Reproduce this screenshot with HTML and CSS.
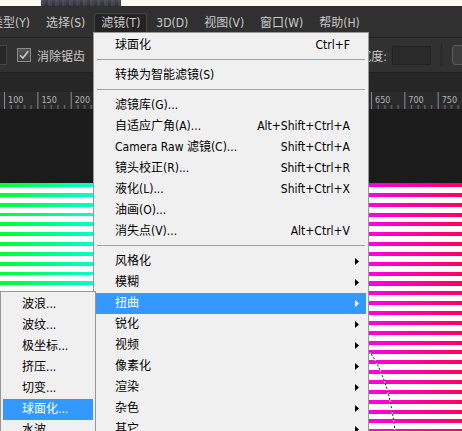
FILE: index.html
```html
<!DOCTYPE html>
<html lang="zh-CN">
<head>
<meta charset="utf-8">
<title>滤镜菜单</title>
<link rel="stylesheet" href="styles.css">
</head>
<body>
<div class="app">
  <div class="topstrip"><div class="thumb"></div></div>
  <div class="menubar">
    <span class="mb-item first">类型(Y)</span>
    <span class="mb-item">选择(S)</span>
    <span class="mb-item active">滤镜(T)</span>
    <span class="mb-item">3D(D)</span>
    <span class="mb-item">视图(V)</span>
    <span class="mb-item">窗口(W)</span>
    <span class="mb-item">帮助(H)</span>
  </div>
  <div class="options">
    <div class="opt-group">
      <span class="field"></span>
      <span class="checkbox"><svg width="14" height="14" viewBox="0 0 14 14"><path d="M3 7.2 L5.8 10 L11.2 3.2" fill="none" stroke="#c9c9c9" stroke-width="1.6"/></svg></span>
      <span class="opt-label">消除锯齿</span>
    </div>
    <div class="opt-group right">
      <span class="opt-label">宽度:</span>
      <span class="field wide"></span>
      <span class="vsep"></span>
      <span class="button"></span>
    </div>
  </div>
  <div class="tabs"></div>
  <div class="ruler">
    <svg width="462" height="17" viewBox="0 0 462 17">
      <defs>
        <pattern id="ticks" x="4" y="0" width="33.36" height="17" patternUnits="userSpaceOnUse">
          <rect x="0" y="0" width="1" height="17" fill="#8a8a8a"/>
          <rect x="6.67" y="13" width="1" height="4" fill="#7a7a7a"/>
          <rect x="13.34" y="13" width="1" height="4" fill="#7a7a7a"/>
          <rect x="20.02" y="13" width="1" height="4" fill="#7a7a7a"/>
          <rect x="26.69" y="13" width="1" height="4" fill="#7a7a7a"/>
        </pattern>
      </defs>
      <rect x="0" y="0" width="462" height="17" fill="url(#ticks)"/>
      <g class="rl">
        <text x="8" y="11">100</text>
        <text x="41.4" y="11">150</text>
        <text x="74.7" y="11">200</text>
        <text x="375" y="11">650</text>
        <text x="408.3" y="11">700</text>
        <text x="441.7" y="11">750</text>
      </g>
    </svg>
  </div>
  <div class="pasteboard"></div>
  <div class="canvas">
    <div class="stripes green"></div>
    <div class="canvas-mid"></div>
    <div class="stripes pink">
      <svg class="ants" width="93" height="248" viewBox="0 0 93 248">
        <path d="M0 168 Q20 195 26 248" fill="none" stroke="#fff" stroke-width="1"/>
        <path d="M0 168 Q20 195 26 248" fill="none" stroke="#000" stroke-width="1" stroke-dasharray="2 2"/>
      </svg>
    </div>
  </div>
</div>

<div class="menu main">
  <div class="mi"><span class="lb">球面化</span><span class="sc">Ctrl+F</span><span class="end"></span></div>
  <div class="sep"></div>
  <div class="mi"><span class="lb">转换为智能滤镜(S)</span><span class="end"></span></div>
  <div class="sep"></div>
  <div class="mi"><span class="lb">滤镜库(G)...</span><span class="end"></span></div>
  <div class="mi"><span class="lb">自适应广角(A)...</span><span class="sc">Alt+Shift+Ctrl+A</span><span class="end"></span></div>
  <div class="mi"><span class="lb">Camera Raw 滤镜(C)...</span><span class="sc">Shift+Ctrl+A</span><span class="end"></span></div>
  <div class="mi"><span class="lb">镜头校正(R)...</span><span class="sc">Shift+Ctrl+R</span><span class="end"></span></div>
  <div class="mi"><span class="lb">液化(L)...</span><span class="sc">Shift+Ctrl+X</span><span class="end"></span></div>
  <div class="mi"><span class="lb">油画(O)...</span><span class="end"></span></div>
  <div class="mi"><span class="lb">消失点(V)...</span><span class="sc">Alt+Ctrl+V</span><span class="end"></span></div>
  <div class="sep"></div>
  <div class="mi"><span class="lb">风格化</span><span class="end"><svg class="arr" width="4" height="7" viewBox="0 0 4 7"><polygon points="0,0 4,3.5 0,7"/></svg></span></div>
  <div class="mi"><span class="lb">模糊</span><span class="end"><svg class="arr" width="4" height="7" viewBox="0 0 4 7"><polygon points="0,0 4,3.5 0,7"/></svg></span></div>
  <div class="mi hl"><span class="lb">扭曲</span><span class="end"><svg class="arr" width="4" height="7" viewBox="0 0 4 7"><polygon points="0,0 4,3.5 0,7"/></svg></span></div>
  <div class="mi"><span class="lb">锐化</span><span class="end"><svg class="arr" width="4" height="7" viewBox="0 0 4 7"><polygon points="0,0 4,3.5 0,7"/></svg></span></div>
  <div class="mi"><span class="lb">视频</span><span class="end"><svg class="arr" width="4" height="7" viewBox="0 0 4 7"><polygon points="0,0 4,3.5 0,7"/></svg></span></div>
  <div class="mi"><span class="lb">像素化</span><span class="end"><svg class="arr" width="4" height="7" viewBox="0 0 4 7"><polygon points="0,0 4,3.5 0,7"/></svg></span></div>
  <div class="mi"><span class="lb">渲染</span><span class="end"><svg class="arr" width="4" height="7" viewBox="0 0 4 7"><polygon points="0,0 4,3.5 0,7"/></svg></span></div>
  <div class="mi"><span class="lb">杂色</span><span class="end"><svg class="arr" width="4" height="7" viewBox="0 0 4 7"><polygon points="0,0 4,3.5 0,7"/></svg></span></div>
  <div class="mi"><span class="lb">其它</span><span class="end"><svg class="arr" width="4" height="7" viewBox="0 0 4 7"><polygon points="0,0 4,3.5 0,7"/></svg></span></div>
</div>

<div class="menu sub">
  <div class="mi"><span class="lb">波浪...</span></div>
  <div class="mi"><span class="lb">波纹...</span></div>
  <div class="mi"><span class="lb">极坐标...</span></div>
  <div class="mi"><span class="lb">挤压...</span></div>
  <div class="mi"><span class="lb">切变...</span></div>
  <div class="mi hl"><span class="lb">球面化...</span></div>
  <div class="mi"><span class="lb">水波...</span></div>
</div>
</body>
</html>
```

FILE: styles.css
```css
html, body {
  margin: 0;
  padding: 0;
}
body {
  width: 462px;
  height: 431px;
  overflow: hidden;
  position: relative;
  background: #1b1b1b;
  font-family: "DejaVu Sans Condensed", "DejaVu Sans", "Noto Sans CJK SC", sans-serif;
  font-size: 12px;
}
.app {
  display: flex;
  flex-direction: column;
  width: 462px;
  height: 431px;
  overflow: hidden;
}
.topstrip {
  height: 6px;
  background: #fbfaef;
  display: flex;
}
.thumb {
  margin-left: 41px;
  width: 80px;
  height: 6px;
  background:
    repeating-linear-gradient(90deg, rgba(120,90,140,0.35) 0 2px, rgba(60,110,90,0.3) 2px 4px, rgba(0,0,0,0) 4px 7px),
    linear-gradient(180deg, #4a4852, #2e2d34);
}
.menubar {
  border-bottom: 1px solid #1f1f1f;
  background: #303030;
  display: flex;
  align-items: flex-start;
  padding-top: 7px;
  box-sizing: border-box;
  height: 32px;
  gap: 2px;
  white-space: nowrap;
}
.mb-item {
  height: 20px;
  line-height: 20px;
  padding: 0 7px;
  color: #c9c9c9;
  flex: none;
}
.mb-item.first {
  margin-left: -16px;
}
.mb-item.active {
  background: #232323;
  box-shadow: inset 0 0 0 1px #474747;
  border-radius: 3px 3px 0 0;
}
.options {
  height: 35px;
  box-sizing: border-box;
  border-bottom: 1px solid #1f1f1f;
  background: #313131;
  display: flex;
  align-items: center;
  justify-content: space-between;
  white-space: nowrap;
}
.opt-group {
  display: flex;
  align-items: center;
}
.opt-group.right {
  margin-right: -20px;
}
.field {
  width: 20px;
  height: 20px;
  box-sizing: border-box;
  background: #272727;
  border: 1px solid #454545;
  margin-left: -13px;
}
.field.wide {
  width: 39px;
  height: 19px;
  margin-left: 5px;
  border-color: #222;
  background: #2a2a2a;
}
.checkbox {
  width: 14px;
  height: 14px;
  margin-left: 10px;
  box-sizing: border-box;
  border: 1px solid #8c8c8c;
  background: linear-gradient(180deg, #555, #3c3c3c);
  display: flex;
  align-items: center;
  justify-content: center;
}
.checkbox svg {
  display: block;
  flex: none;
}
.opt-label {
  color: #c9c9c9;
  margin-left: 6px;
}
.vsep {
  width: 1px;
  height: 22px;
  background: #262626;
  margin-left: 10px;
}
.button {
  width: 30px;
  height: 20px;
  box-sizing: border-box;
  margin-left: 10px;
  background: #3d3d3d;
  border: 1px solid #5a5a5a;
  border-radius: 3px;
}
.tabs {
  height: 19px;
  background: #262626;
}
.ruler {
  height: 17px;
  background: #2a2a2a;
}
.ruler svg {
  display: block;
}
.rl text {
  font-family: "DejaVu Sans Condensed", "DejaVu Sans", sans-serif;
  font-size: 9px;
  fill: #b4b4b4;
}
.pasteboard {
  height: 74px;
  background: #1b1b1b;
}
.canvas {
  flex: 1;
  display: flex;
  min-height: 0;
}
.stripes {
  width: 93px;
  flex: none;
  position: relative;
}
.stripes.green {
  background:
    repeating-linear-gradient(180deg, rgba(255,255,255,0) 0 3.8px, #fff 3.8px 9.85px),
    linear-gradient(90deg, #00ff30, #00ffcc);
}
.stripes.pink {
  background:
    repeating-linear-gradient(180deg, rgba(255,255,255,0) 0 4px, #fff 4px 9.85px),
    linear-gradient(90deg, #ff00e6, #ff0062);
}
.canvas-mid {
  flex: 1;
  background: #fff;
}
.ants {
  position: absolute;
  left: 0;
  top: 0;
  display: block;
}
.menu {
  position: absolute;
  box-sizing: border-box;
  background: #f0f0f0;
  border: 1px solid #979797;
  padding: 2px;
  color: #000;
  white-space: nowrap;
}
.menu.main {
  left: 93px;
  top: 32px;
  width: 276px;
  z-index: 2;
}
.menu.sub {
  left: 0;
  top: 291px;
  width: 96px;
  z-index: 3;
}
.mi {
  height: 21px;
  line-height: 21px;
  display: flex;
  align-items: center;
  padding-left: 19px;
}
.mi .lb {
  flex: 1;
}
.mi .sc {
  flex: none;
}
.mi .end {
  width: 16px;
  flex: none;
  display: flex;
  align-items: center;
}
.arr {
  display: block;
  margin-left: 5px;
  fill: #000;
}
.mi.hl {
  background: #3399ff;
  color: #fff;
}
.mi.hl .arr {
  fill: #fff;
}
.sep {
  height: 1px;
  margin: 3px 1px 5px;
  background: #a3a3a3;
}
```
